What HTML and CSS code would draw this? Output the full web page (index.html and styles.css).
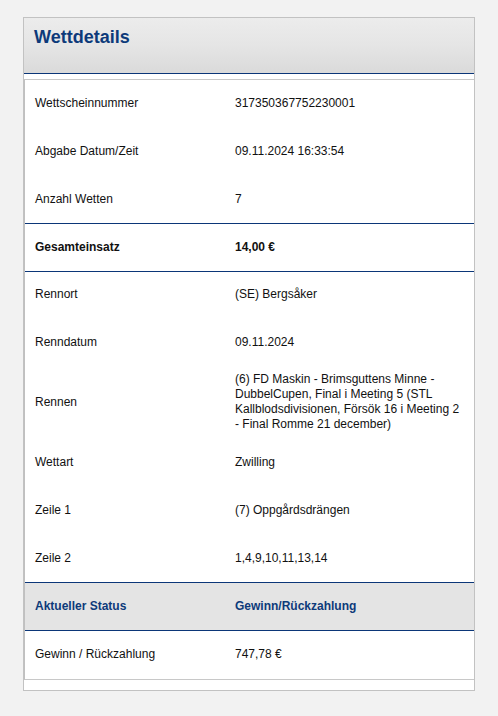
FILE: index.html
```html
<!DOCTYPE html>
<html lang="de">
<head>
    <meta charset="UTF-8">
    <meta name="viewport" content="width=device-width, initial-scale=1.0">
    <title>Wettdetails</title>
    <link rel="stylesheet" href="styles.css">
</head>
<body>
    <div class="panel">
        <div class="panel-header">
            <h2>Wettdetails</h2>
        </div>

        <table class="details">
            <tr>
                <td class="label">Wettscheinnummer</td>
                <td class="value">317350367752230001</td>
            </tr>
            <tr>
                <td class="label">Abgabe Datum/Zeit</td>
                <td class="value">09.11.2024 16:33:54</td>
            </tr>
            <tr>
                <td class="label">Anzahl Wetten</td>
                <td class="value">7</td>
            </tr>
            <tr class="total">
                <td class="label">Gesamteinsatz</td>
                <td class="value">14,00 €</td>
            </tr>
            <tr class="section-start">
                <td class="label">Rennort</td>
                <td class="value">(SE) Bergsåker</td>
            </tr>
            <tr>
                <td class="label">Renndatum</td>
                <td class="value">09.11.2024</td>
            </tr>
            <tr class="tall">
                <td class="label">Rennen</td>
                <td class="value">(6) FD Maskin - Brimsguttens Minne - DubbelCupen, Final i Meeting 5 (STL Kallblodsdivisionen, Försök 16 i Meeting 2 - Final Romme 21 december)</td>
            </tr>
            <tr>
                <td class="label">Wettart</td>
                <td class="value">Zwilling</td>
            </tr>
            <tr>
                <td class="label">Zeile 1</td>
                <td class="value">(7) Oppgårdsdrängen</td>
            </tr>
            <tr>
                <td class="label">Zeile 2</td>
                <td class="value">1,4,9,10,11,13,14</td>
            </tr>
            <tr class="status">
                <td class="label">Aktueller Status</td>
                <td class="value">Gewinn/Rückzahlung</td>
            </tr>
            <tr class="section-start last">
                <td class="label">Gewinn / Rückzahlung</td>
                <td class="value">747,78 €</td>
            </tr>
        </table>
    </div>
</body>
</html>
```

FILE: styles.css
```css
body {
    font-family: "Liberation Sans", Arial, sans-serif;
    font-size: 12px;
    color: #111;
    background-color: #f2f2f2;
    margin: 17px 23px;
}
.panel {
    background-color: #fff;
    border: 1px solid #c2c2c2;
    padding-bottom: 10px;
}
.panel-header {
    height: 55px;
    padding: 0 10px;
    background: linear-gradient(#ececec, #e5e5e5 50%, #dadada);
    border-bottom: 1px solid #0b3678;
}
.panel-header h2 {
    margin: 0;
    padding-top: 8px;
    font-size: 18px;
    line-height: 22px;
    color: #0d3a7a;
}
.details {
    width: 100%;
    margin-top: 5px;
    border-collapse: separate;
    border-spacing: 0;
    border-top: 1px solid #c8c8c8;
    border-left: 1px solid #c0c0c0;
    border-bottom: 1px solid #c8c8c8;
}
.details td {
    height: 47.67px;
    box-sizing: border-box;
    padding: 6px 12px 6px 10px;
    line-height: 15px;
    vertical-align: middle;
}
.details .tall td {
    height: 73px;
}
.details .last td {
    height: 49px;
}
.details .label {
    width: 200px;
}
.total td {
    font-weight: bold;
    border-top: 1px solid #0b3678;
}
.section-start td {
    border-top: 1px solid #0b3678;
}
.status td {
    background-color: #e4e4e4;
    color: #0d3a7a;
    font-weight: bold;
    border-top: 1px solid #0b3678;
}
```
